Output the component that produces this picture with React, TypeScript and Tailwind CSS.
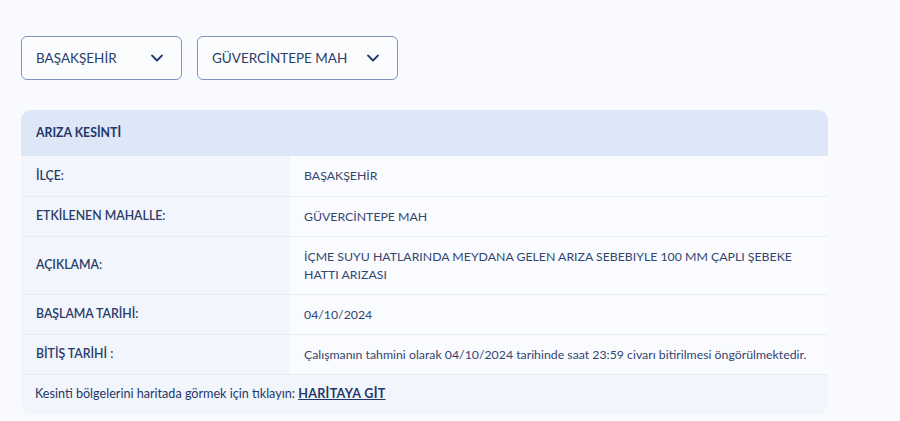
import { ChevronDown } from 'lucide-react';

const rows = [
  { label: 'İLÇE:', value: 'BAŞAKŞEHİR', h: 'h-[41px]' },
  { label: 'ETKİLENEN MAHALLE:', value: 'GÜVERCİNTEPE MAH', h: 'h-[40px]' },
  {
    label: 'AÇIKLAMA:',
    value: 'İÇME SUYU HATLARINDA MEYDANA GELEN ARIZA SEBEBIYLE 100 MM ÇAPLI ŞEBEKE HATTI ARIZASI',
    h: 'h-[58px]',
  },
  { label: 'BAŞLAMA TARİHİ:', value: '04/10/2024', h: 'h-[40px]' },
  {
    label: 'BİTİŞ TARİHİ :',
    value: 'Çalışmanın tahmini olarak 04/10/2024 tarihinde saat 23:59 civarı bitirilmesi öngörülmektedir.',
    h: 'h-[40px]',
  },
];

function Dropdown({ text, width }: { text: string; width: string }) {
  return (
    <button
      className={`${width} h-[44px] flex items-center justify-between pl-[14px] pr-[14px] rounded-[6px] border border-[#7d93bd] bg-white/40 text-[13.5px] text-[#2a3c6a]`}
    >
      <span>{text}</span>
      <ChevronDown className="w-[20px] h-[20px] text-[#1f3a6e]" strokeWidth={2.2} />
    </button>
  );
}

export default function App() {
  return (
    <div className="min-h-[421px] bg-[#f8fafd] pl-[21px] pt-[36px] pb-[7px] font-['Lato',sans-serif]">
      <div className="flex gap-[15px]">
        <Dropdown text="BAŞAKŞEHİR" width="w-[161px]" />
        <Dropdown text="GÜVERCİNTEPE MAH" width="w-[201px]" />
      </div>

      <div className="mt-[30px] w-[807px] rounded-[10px] overflow-hidden bg-[#f2f5fb] text-[12.3px]">
        <div className="h-[46px] flex items-center px-[15px] bg-[#dee7f7] font-bold text-[#23386a]">
          ARIZA KESİNTİ
        </div>
        {rows.map(r => (
          <div key={r.label} className={`flex ${r.h} border-b border-[#e7ebf2]`}>
            <div className="w-[269px] shrink-0 flex items-center px-[15px] font-semibold text-[#2a3c6a]">
              {r.label}
            </div>
            <div className="flex-1 flex items-center pl-[14px] pr-[20px] bg-[#f9fbfe] text-[#34466f] leading-[18px]">
              {r.value}
            </div>
          </div>
        ))}
        <div className="h-[39px] flex items-center px-[14px] text-[12.6px] text-[#23386a]">
          Kesinti bölgelerini haritada görmek için tıklayın:&nbsp;
          <a className="font-bold underline tracking-[0.3px] text-[#23386a]">HARİTAYA GİT</a>
        </div>
      </div>
    </div>
  );
}
